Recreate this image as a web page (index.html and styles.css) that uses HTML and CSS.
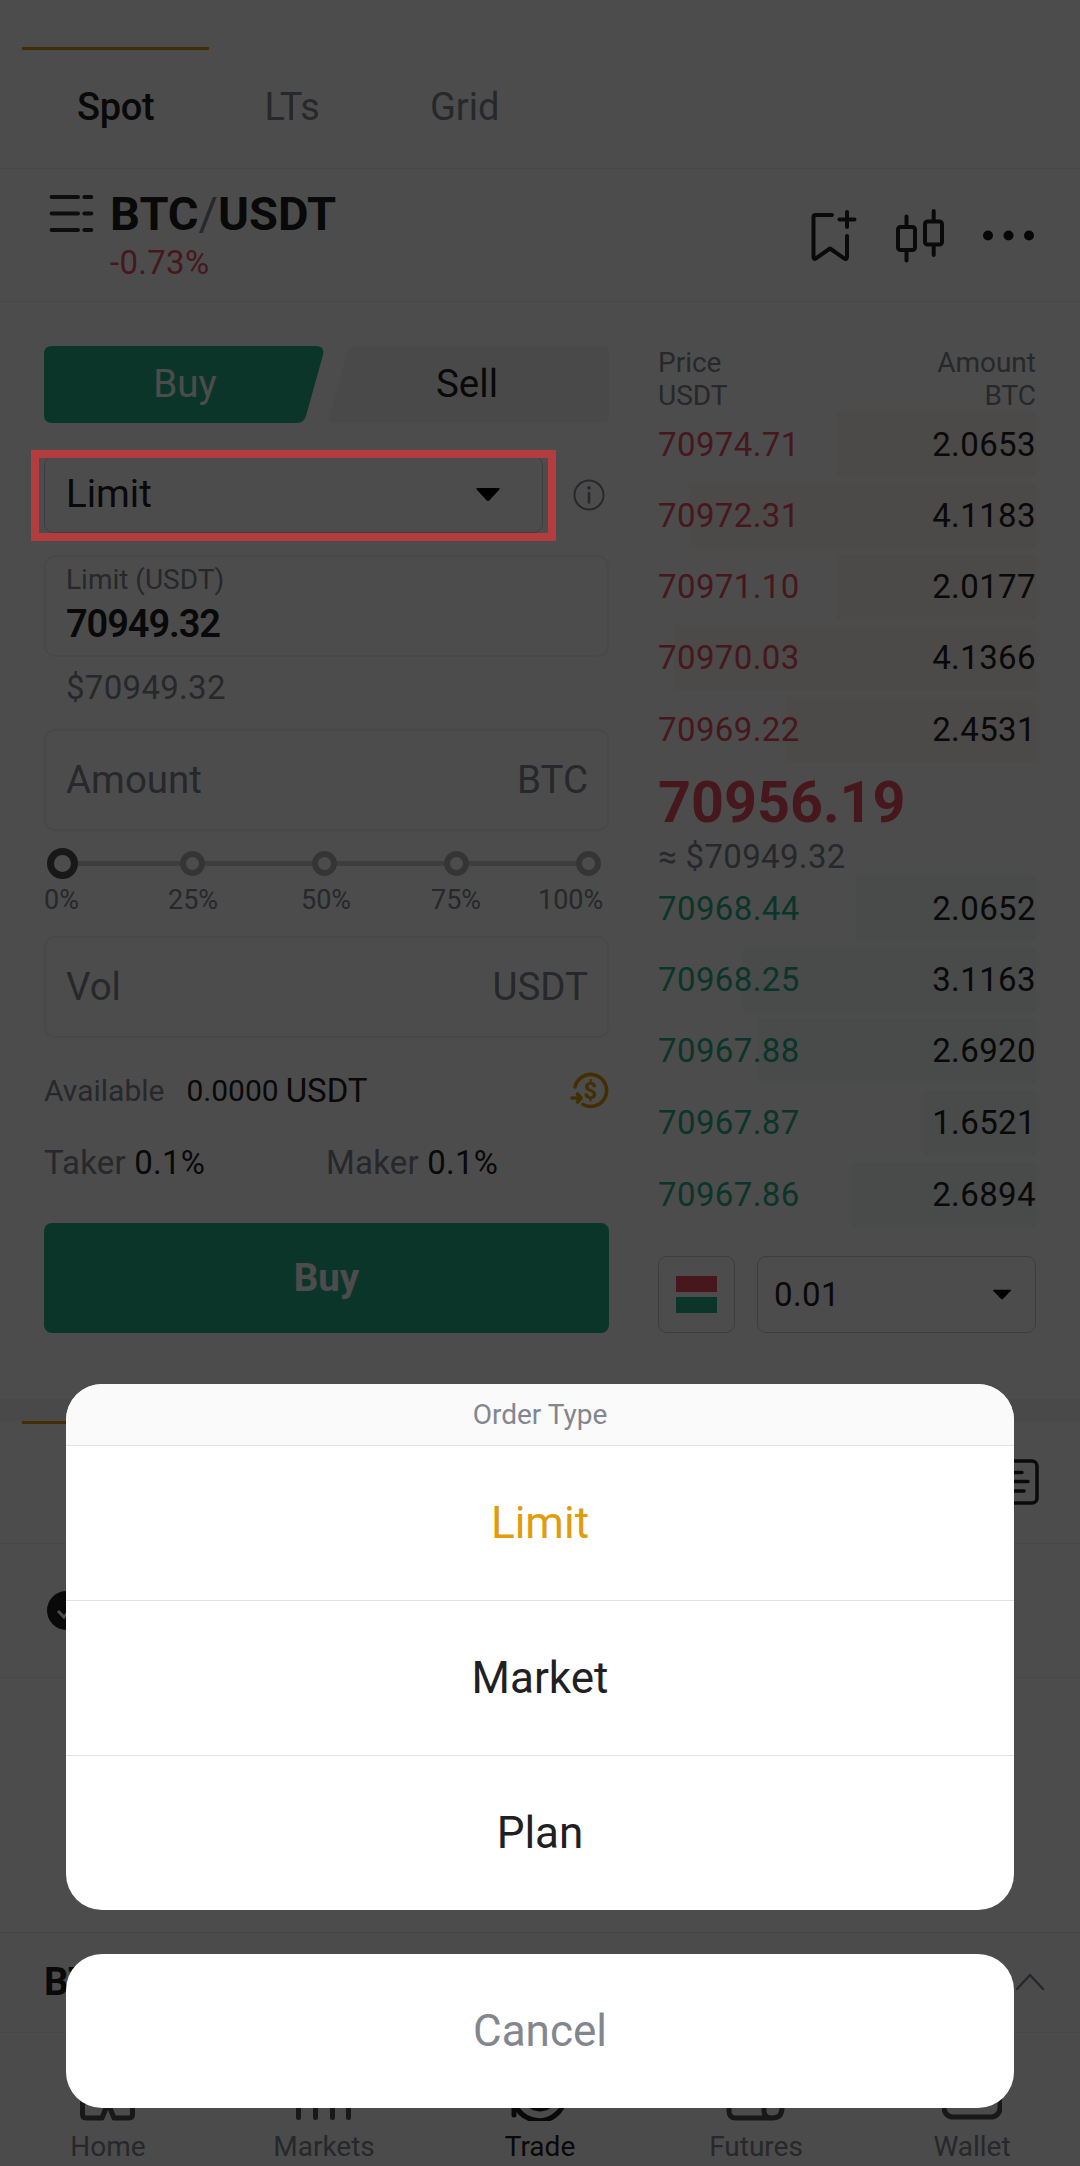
FILE: index.html
```html
<!DOCTYPE html>
<html lang="en">
<head>
<meta charset="utf-8">
<title>BTC/USDT Spot</title>
<link rel="stylesheet" href="styles.css">
</head>
<body>
<div class="app">
  <nav class="tabs">
    <span class="tab active">Spot</span>
    <span class="tab">LTs</span>
    <span class="tab">Grid</span>
  </nav>

  <header class="pair">
    <svg class="pair-list" width="46" height="40" viewBox="0 0 46 40" fill="none" stroke="#2d2e30" stroke-width="4" stroke-linecap="round"><path d="M3.600 4H30M36.300 4H43.300M3.600 20.500H30M36.300 20.500H43.300M3.600 37H30M36.300 37H43.300"/></svg>
    <div class="pair-text">
      <div class="pair-name">BTC<span>/</span>USDT</div>
      <div class="pair-change">-0.73%</div>
    </div>
    <div class="pair-actions">
      <svg width="48" height="56" viewBox="0 2 48 56" fill="none" stroke="#222427" stroke-width="4" stroke-linecap="round" stroke-linejoin="round"><path d="M23 9H6.500Q4.500 9 4.500 11V51Q4.500 54 7 52.300L21 42.500L35 52.300Q38 54 38 51V30M38 6V21M30.500 13.500H45.500"/></svg>
      <svg width="50" height="56" viewBox="0 0 50 56" fill="none" stroke="#222427" stroke-width="4" stroke-linecap="round"><rect x="3" y="19" width="17" height="23" rx="2.500"/><rect x="30" y="13.500" width="17" height="23" rx="2.500"/><path d="M11.500 8.500V19M11.500 42V52.500M38.700 3V13M38.700 37V47"/></svg>
      <svg width="52" height="12" viewBox="0 0 52 12" fill="#18191c"><circle cx="5" cy="5.500" r="5"/><circle cx="25.500" cy="5.500" r="5"/><circle cx="46" cy="5.500" r="5"/></svg>
    </div>
  </header>

  <main class="trade">
    <section class="form">
      <div class="sides">
        <svg class="sides-shape" width="565" height="77" viewBox="0 0 565 77"><path fill="#28b189" d="M8 0H272Q281 0 279 9L262 70Q260 77 253 77H8Q0 77 0 69V8Q0 0 8 0Z"/><path fill="#f5f5f6" d="M311 0H557Q565 0 565 8V69Q565 77 557 77H292Q284 77 286 69L303 7Q305 0 311 0Z"/></svg>
        <span class="side side-buy">Buy</span>
        <span class="side side-sell">Sell</span>
      </div>

      <div class="type-row">
        <div class="select type-select"><span>Limit</span>
          <svg width="26" height="15" viewBox="0 0 26 15"><path d="M2.500 1H23.500Q25.500 1 24.200 2.800L14.500 13.200Q13 14.700 11.500 13.200L1.800 2.800Q.5 1 2.500 1Z"/></svg>
        </div>
        <svg width="32" height="32" viewBox="0 0 32 32" fill="none" stroke="#83868f" stroke-width="2"><circle cx="16" cy="16" r="14.500"/><path stroke-width="2.600" stroke-linecap="round" d="M16 14V23.500"/><circle cx="16" cy="8.800" r="1.900" fill="#83868f" stroke="none"/></svg>
      </div>

      <div class="field price-field">
        <span class="field-label">Limit (USDT)</span>
        <span class="field-value">70949.32</span>
      </div>
      <div class="fiat">$70949.32</div>

      <div class="field"><span>Amount</span><span>BTC</span></div>

      <div class="slider">
        <div class="track"><i class="dot on"></i><i class="dot"></i><i class="dot"></i><i class="dot"></i><i class="dot"></i></div>
        <div class="marks"><span>0%</span><span>25%</span><span>50%</span><span>75%</span><span>100%</span></div>
      </div>

      <div class="field"><span>Vol</span><span>USDT</span></div>

      <div class="available">
        <span class="muted">Available</span>
        <span class="balance">0.0000</span>
        <span class="unit">USDT</span>
        <svg width="40" height="40" viewBox="0 0 40 40" fill="none" stroke="#e09c0a" stroke-width="3.600" stroke-linecap="round" stroke-linejoin="round"><path d="M6 16A16 16 0 1 1 14 33.500M3 27H12M8.500 23L12 27L8.500 31"/><text x="21.500" y="27.500" font-size="24" font-weight="700" text-anchor="middle" fill="#e09c0a" stroke="none">$</text></svg>
      </div>
      <div class="fees">
        <span><span class="muted">Taker</span> 0.1%</span>
        <span><span class="muted">Maker</span> 0.1%</span>
      </div>
      <div class="submit">Buy</div>
    </section>

    <section class="book">
      <div class="book-head"><span>Price<br>USDT</span><span>Amount<br>BTC</span></div>
      <div class="rows asks">
        <div class="row"><i style="width:199.500px"></i><b>70974.71</b><span>2.0653</span></div>
        <div class="row"><i style="width:347px"></i><b>70972.31</b><span>4.1183</span></div>
        <div class="row"><i style="width:199px"></i><b>70971.10</b><span>2.0177</span></div>
        <div class="row"><i style="width:362px"></i><b>70970.03</b><span>4.1366</span></div>
        <div class="row"><i style="width:250px"></i><b>70969.22</b><span>2.4531</span></div>
      </div>
      <div class="last">70956.19</div>
      <div class="last-fiat">≈ $70949.32</div>
      <div class="rows bids">
        <div class="row"><i style="width:180px"></i><b>70968.44</b><span>2.0652</span></div>
        <div class="row"><i style="width:293px"></i><b>70968.25</b><span>3.1163</span></div>
        <div class="row"><i style="width:278px"></i><b>70967.88</b><span>2.6920</span></div>
        <div class="row"><i style="width:112px"></i><b>70967.87</b><span>1.6521</span></div>
        <div class="row"><i style="width:184px"></i><b>70967.86</b><span>2.6894</span></div>
      </div>
      <div class="book-foot">
        <div class="select depth-mode"><i></i><i></i></div>
        <div class="select depth-step"><span>0.01</span>
          <svg width="20" height="11" viewBox="0 0 26 15" preserveAspectRatio="none"><path d="M2.500 1H23.500Q25.500 1 24.200 2.800L14.500 13.200Q13 14.700 11.500 13.200L1.800 2.800Q.5 1 2.500 1Z"/></svg>
        </div>
      </div>
    </section>
  </main>

  <div class="band"></div>
  <div class="orders-head">
    <i class="orders-mark"></i>
    <svg width="42" height="46" viewBox="0 0 42 46" fill="none" stroke="#222427" stroke-width="3.500" stroke-linecap="round"><rect x="2" y="2" width="37" height="42" rx="5"/><path d="M12 13.500H24M12 22.500H30M12 32H26"/></svg>
  </div>
  <div class="orders-filter">
    <svg width="39" height="39" viewBox="0 0 39 39"><circle cx="19.500" cy="19.500" r="19.500" fill="#1e2024"/><path d="M11 20L17 26L28 14" fill="none" stroke="#fff" stroke-width="3"/></svg>
  </div>
  <div class="orders-empty"></div>
  <div class="chart-bar">
    <span>BTC/USDT</span>
    <svg width="30" height="18" viewBox="0 0 30 18" fill="none" stroke="#83868f" stroke-width="2.400" stroke-linecap="round" stroke-linejoin="round"><path d="M2 16L15 2L28 16"/></svg>
  </div>
  <footer class="bottom-nav">
    <div class="nav-item"><svg viewBox="0 0 60 56"><path d="M4.500 22V49Q4.500 53 8 53H24L30 38L36 53H51Q54.500 53 54.500 49V22L30 4Z"/></svg>Home</div>
    <div class="nav-item"><svg viewBox="0 0 60 56"><path stroke-linecap="round" d="M4.500 30V52.500M21.500 12V52.500M38.500 22V52.500M54.500 6V52.500"/></svg>Markets</div>
    <div class="nav-item current"><svg viewBox="0 0 60 56"><path stroke-linecap="round" d="M4 50V38H14M5 39A26 26 0 1 0 6 18"/><circle cx="30" cy="28" r="16"/></svg>Trade</div>
    <div class="nav-item"><svg viewBox="0 0 60 56"><path d="M3 4H38V46Q38 53 46 53Q56 53 56 43V34H38M3 4V46Q3 53 10 53H46"/></svg>Futures</div>
    <div class="nav-item"><svg viewBox="0 0 60 56"><rect x="2" y="8" width="56" height="44" rx="9"/></svg>Wallet</div>
  </footer>
</div>

<div class="overlay"></div>
<div class="highlight"></div>
<div class="sheet">
  <div class="options">
    <div class="options-title">Order Type</div>
    <div class="option selected">Limit</div>
    <div class="option">Market</div>
    <div class="option">Plan</div>
  </div>
  <div class="cancel">Cancel</div>
</div>
</body>
</html>
```
FILE: styles.css
```css
* { box-sizing: border-box; }
body {
  margin: 0;
  width: 1080px;
  height: 2166px;
  position: relative;
  overflow: hidden;
  background: #fff;
  color: #1e2024;
  font-family: Roboto, "Liberation Sans", sans-serif;
}
svg { display: block; flex: none; }
.muted { color: #83868f; }

.app { height: 2166px; display: flex; flex-direction: column; }

.tabs {
  margin-top: 47px;
  height: 122px;
  padding-left: 22px;
  display: flex;
  border-bottom: 1px solid #e8e9ea;
  font-size: 38px;
  color: #83868f;
}
.tab {
  padding: 0 55px;
  line-height: 115px;
  border-top: 3px solid transparent;
}
.tab.active { color: #1e2024; font-weight: 500; border-color: #e09c0a; letter-spacing: -.3px; }

.pair {
  height: 133px;
  padding: 15px 45px 0 48px;
  display: flex;
  border-bottom: 1px solid #e8e9ea;
}
.pair-list { margin: 9px 16px 0 0; }
.pair-name { font-size: 47px; line-height: 60px; font-weight: 700; }
.pair-name span { font-weight: 400; color: #83868f; }
.pair-change { font-size: 33px; line-height: 37px; letter-spacing: .3px; color: #e95067; }
.pair-actions {
  margin: 22px 0 0 auto;
  height: 60px;
  display: flex;
  align-items: center;
  gap: 38px;
}

.trade {
  height: 1097px;
  padding: 44px 44px 66px;
  display: flex;
  gap: 49px;
}
.form { width: 565px; }
.book { width: 378px; display: flex; flex-direction: column; }

.sides { height: 77px; display: flex; position: relative; font-size: 38.500px; line-height: 76px; text-align: center; }
.sides-shape { position: absolute; left: 0; top: 0; }
.side { position: relative; width: 282px; }
.side-buy { color: #fff; }

.type-row { margin-top: 33px; display: flex; align-items: center; gap: 30px; }
.select {
  height: 77px;
  border: 1px solid #ccc;
  border-radius: 9px;
  display: flex;
  align-items: center;
  justify-content: space-between;
}
.type-select { width: 499px; padding: 0 41px 0 21px; font-size: 38.500px; }
.type-select span { padding-bottom: 2px; }
.field {
  height: 102px;
  padding: 0 19px 2px 20px;
  border: 2px solid #f0f1f1;
  border-radius: 11px;
  display: flex;
  align-items: center;
  justify-content: space-between;
  font-size: 38.500px;
  color: #83868f;
}
.price-field {
  margin-top: 22px;
  padding-top: 6px;
  flex-direction: column;
  align-items: flex-start;
  justify-content: flex-start;
}
.field-label { font-size: 28px; line-height: 34px; }
.field-value { font-size: 38px; line-height: 54px; font-weight: 600; letter-spacing: -1.100px; color: #1e2024; }
.fiat { height: 72px; padding-left: 22px; font-size: 33px; line-height: 62px; letter-spacing: .3px; color: #83868f; }

.slider { height: 105px; padding-top: 17px; }
.track {
  height: 31px;
  padding-left: 2.500px;
  display: flex;
  align-items: center;
  background: linear-gradient(#cbcbcb, #cbcbcb) 20px 50% / 520px 5px no-repeat;
}
.dot { width: 25px; height: 25px; border: 6px solid #b2b2b2; border-radius: 50%; background: #fff; margin-left: 107px; }
.dot.on { width: 31px; height: 31px; border: 7px solid #505050; margin: 0 -4.500px 0 0; }
.marks {
  display: grid;
  grid-template-columns: 124px 133px 130px 107px auto;
  margin-top: 5px;
  font-size: 27px;
  line-height: 33px;
  color: #83868f;
}

.available { margin-top: 16px; height: 73px; display: flex; align-items: center; font-size: 30px; }
.balance { margin-left: 22px; }
.unit { margin-left: 7px; font-size: 33px; }
.available svg { margin-left: auto; }
.fees { height: 71px; display: grid; grid-template-columns: 282px 1fr; align-items: center; font-size: 33px; letter-spacing: .2px; }
.submit {
  margin-top: 25px;
  height: 110px;
  border-radius: 8px;
  background: #28b189;
  color: #fff;
  font-size: 38.500px;
  font-weight: 700;
  line-height: 110px;
  text-align: center;
}

.book-head { display: flex; justify-content: space-between; font-size: 28px; line-height: 33px; color: #83868f; }
.book-head span:last-child { text-align: right; }
.rows { display: flex; flex-direction: column; gap: 6px; }
.row {
  position: relative;
  height: 65px;
  display: flex;
  align-items: center;
  justify-content: space-between;
  font-size: 33px;
  letter-spacing: .4px;
}
.asks .row:last-child, .bids .row:nth-child(n+4) { margin-top: 1px; }
.row b, .row span { position: relative; font-weight: 400; }
.row i { position: absolute; right: 0; top: 0; height: 65px; }
.asks i { background: #fdf3f5; }
.bids i { background: #f4f9f8; }
.asks b, .last { color: #e95067; }
.bids b { color: #28b189; }
.last { font-size: 57.500px; font-weight: 700; line-height: 81px; }
.last-fiat { margin-bottom: 5px; font-size: 33px; line-height: 28px; letter-spacing: .35px; color: #83868f; }
.book-foot { margin-top: auto; display: flex; gap: 22px; }
.depth-mode { width: 77px; flex-direction: column; justify-content: center; gap: 5px; }
.depth-mode i { width: 41px; height: 16px; background: #e95067; }
.depth-mode i:last-child { background: #28b189; }
.depth-step { flex: 1; padding: 0 23px 0 16px; font-size: 33px; letter-spacing: .4px; }

.band { height: 22px; background: #f5f5f6; }
.orders-head {
  height: 123px;
  padding: 0 40px 0 22px;
  display: flex;
  justify-content: space-between;
  align-items: center;
  border-bottom: 1px solid #e8e9ea;
}
.orders-mark { width: 188px; height: 3px; background: #e09c0a; align-self: flex-start; }
.orders-filter { height: 134px; padding: 0 0 1px 47px; display: flex; align-items: center; border-bottom: 1px solid #e8e9ea; }
.orders-empty { flex: 1; }
.chart-bar {
  height: 101px;
  padding: 0 35px 2px 44px;
  display: flex;
  align-items: center;
  justify-content: space-between;
  border-top: 1px solid #e8e9ea;
  border-bottom: 1px solid #e8e9ea;
  background: #fafafa;
  font-size: 38.500px;
  font-weight: 700;
}
.bottom-nav { height: 133px; display: flex; background: #fafafa; }
.nav-item {
  flex: 1;
  padding-top: 32px;
  display: flex;
  flex-direction: column;
  align-items: center;
  gap: 9px;
  font-size: 28px;
  line-height: 34px;
  color: #83868f;
}
.nav-item svg { width: 60px; height: 56px; fill: none; stroke: #505050; stroke-width: 5; stroke-linejoin: round; }
.nav-item.current { color: #1e2024; }
.nav-item.current svg { stroke: #1e2024; }

.overlay { position: absolute; inset: 0; background: rgba(0, 0, 0, .7); }
.highlight { position: absolute; left: 31px; top: 450px; width: 525px; height: 91px; border: 8px solid #b33d3e; }
.sheet { position: absolute; left: 66px; right: 66px; top: 1384px; display: flex; flex-direction: column; gap: 44px; text-align: center; font-size: 44px; }
.options { height: 526px; border-radius: 36px; overflow: hidden; background: #fff; }
.options-title { height: 61px; line-height: 61px; background: #fafafa; font-size: 28px; color: #83868f; }
.option { height: 155px; line-height: 155px; border-top: 1px solid #e2e2e3; }
.selected { color: #e09c0a; }
.cancel { height: 154px; line-height: 154px; border-radius: 36px; background: #fff; color: #83868f; }
```
